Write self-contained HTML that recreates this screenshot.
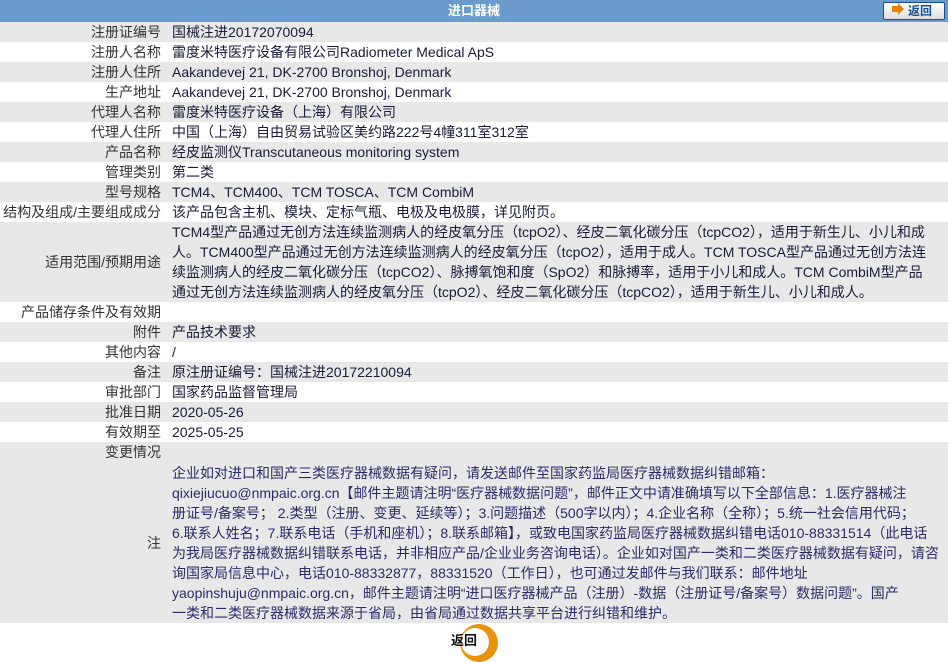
<!DOCTYPE html>
<html><head><meta charset="utf-8"><style>
body{margin:0;width:948px;height:654px;background:#fff;font-family:"Liberation Sans","Noto Sans CJK SC",sans-serif;font-size:14px;overflow:hidden;position:relative}
.hd{position:absolute;left:0;top:0;width:948px;height:22px;background:#6a9bcc;color:#fff;font-weight:bold;text-align:center;line-height:22px;font-size:13px}
.btn{position:absolute;left:883px;top:2px;width:60px;height:16px;border:1px solid #1d4f8f;border-radius:2px;background:linear-gradient(#fff,#ddd);}
.btn .ar{position:absolute;left:8px;top:3px;width:6px;height:6px;background:#e8800c}
.btn .ar:after{content:"";position:absolute;left:6px;top:-3px;border-left:6px solid #e8800c;border-top:6px solid transparent;border-bottom:6px solid transparent}
.btn .t{position:absolute;left:24px;top:0;line-height:16px;font-size:12px;font-weight:bold;color:#1d4f8f}
.r{position:absolute;left:0;width:948px}
.g{background:#e8e8e8}
.l{position:absolute;right:787px;white-space:nowrap;color:#333;line-height:20px}
.v{position:absolute;left:172px;white-space:nowrap;color:#1a1a3a;line-height:20px}
.n{color:#2a2a6a}
</style></head><body>
<div class="hd">进口器械</div>
<div class="btn"><div class="ar"></div><div class="t">返回</div></div>

<div class="r g" style="top:22px;height:20px"><span class="l">注册证编号</span><span class="v">国械注进20172070094</span></div>
<div class="r" style="top:42px;height:20px"><span class="l">注册人名称</span><span class="v">雷度米特医疗设备有限公司Radiometer Medical ApS</span></div>
<div class="r g" style="top:62px;height:20px"><span class="l">注册人住所</span><span class="v">Aakandevej 21, DK-2700 Bronshoj, Denmark</span></div>
<div class="r" style="top:82px;height:20px"><span class="l">生产地址</span><span class="v">Aakandevej 21, DK-2700 Bronshoj, Denmark</span></div>
<div class="r g" style="top:102px;height:20px"><span class="l">代理人名称</span><span class="v">雷度米特医疗设备（上海）有限公司</span></div>
<div class="r" style="top:122px;height:20px"><span class="l">代理人住所</span><span class="v">中国（上海）自由贸易试验区美约路222号4幢311室312室</span></div>
<div class="r g" style="top:142px;height:20px"><span class="l">产品名称</span><span class="v">经皮监测仪Transcutaneous monitoring system</span></div>
<div class="r" style="top:162px;height:20px"><span class="l">管理类别</span><span class="v">第二类</span></div>
<div class="r g" style="top:182px;height:20px"><span class="l">型号规格</span><span class="v">TCM4、TCM400、TCM TOSCA、TCM CombiM</span></div>
<div class="r" style="top:202px;height:20px"><span class="l">结构及组成/主要组成成分</span><span class="v">该产品包含主机、模块、定标气瓶、电极及电极膜，详见附页。</span></div>
<div class="r g" style="top:222px;height:80px"><span class="l" style="top:30px">适用范围/预期用途</span><span class="v">TCM4型产品通过无创方法连续监测病人的经皮氧分压（tcpO2）、经皮二氧化碳分压（tcpCO2），适用于新生儿、小儿和成<br>人。TCM400型产品通过无创方法连续监测病人的经皮氧分压（tcpO2），适用于成人。TCM TOSCA型产品通过无创方法连<br>续监测病人的经皮二氧化碳分压（tcpCO2）、脉搏氧饱和度（SpO2）和脉搏率，适用于小儿和成人。TCM CombiM型产品<br>通过无创方法连续监测病人的经皮氧分压（tcpO2）、经皮二氧化碳分压（tcpCO2），适用于新生儿、小儿和成人。</span></div>
<div class="r" style="top:302px;height:20px"><span class="l">产品储存条件及有效期</span></div>
<div class="r g" style="top:322px;height:20px"><span class="l">附件</span><span class="v">产品技术要求</span></div>
<div class="r" style="top:342px;height:20px"><span class="l">其他内容</span><span class="v">/</span></div>
<div class="r g" style="top:362px;height:20px"><span class="l">备注</span><span class="v">原注册证编号：国械注进20172210094</span></div>
<div class="r" style="top:382px;height:20px"><span class="l">审批部门</span><span class="v">国家药品监督管理局</span></div>
<div class="r g" style="top:402px;height:20px"><span class="l">批准日期</span><span class="v">2020-05-26</span></div>
<div class="r" style="top:422px;height:20px"><span class="l">有效期至</span><span class="v">2025-05-25</span></div>
<div class="r g" style="top:442px;height:21px"><span class="l">变更情况</span></div>
<div class="r g" style="top:463px;height:160px"><span class="l" style="top:70px">注</span><span class="v n">企业如对进口和国产三类医疗器械数据有疑问，请发送邮件至国家药监局医疗器械数据纠错邮箱：<br>qixiejiucuo@nmpaic.org.cn【邮件主题请注明“医疗器械数据问题”，邮件正文中请准确填写以下全部信息：1.医疗器械注<br>册证号/备案号； 2.类型（注册、变更、延续等）；3.问题描述（500字以内）；4.企业名称（全称）；5.统一社会信用代码；<br>6.联系人姓名；7.联系电话（手机和座机）；8.联系邮箱】，或致电国家药监局医疗器械数据纠错电话010-88331514（此电话<br>为我局医疗器械数据纠错联系电话，并非相应产品/企业业务咨询电话）。企业如对国产一类和二类医疗器械数据有疑问，请咨<br>询国家局信息中心，电话010-88332877，88331520（工作日），也可通过发邮件与我们联系：邮件地址<br>yaopinshuju@nmpaic.org.cn，邮件主题请注明“进口医疗器械产品（注册）-数据（注册证号/备案号）数据问题”。国产<br>一类和二类医疗器械数据来源于省局，由省局通过数据共享平台进行纠错和维护。</span></div>

<div style="position:absolute;left:460px;top:624px;width:38px;height:38px;border-radius:50%;background:#e8930e"></div>
<div style="position:absolute;left:461px;top:628px;width:28px;height:28px;border-radius:50%;background:#fff"></div>
<div style="position:absolute;left:451px;top:632px;font-size:13px;font-weight:bold;color:#111;line-height:18px">返回</div>
</body></html>
